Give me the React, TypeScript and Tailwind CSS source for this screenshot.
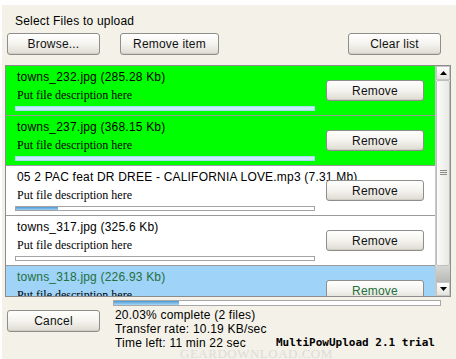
const files = [
  { name: "towns_232.jpg (285.28 Kb)", bg: "bg-[#00ff00]", text: "text-black", done: true, pct: 100 },
  { name: "towns_237.jpg (368.15 Kb)", bg: "bg-[#00ff00]", text: "text-black", done: true, pct: 100 },
  { name: "05 2 PAC feat DR DREE - CALIFORNIA LOVE.mp3 (7.31 Mb)", bg: "bg-white", text: "text-black", done: false, pct: 14 },
  { name: "towns_317.jpg (325.6 Kb)", bg: "bg-white", text: "text-black", done: false, pct: 0 },
  { name: "towns_318.jpg (226.93 Kb)", bg: "bg-[#9fd3f7]", text: "text-[#23703c]", done: false, pct: 0 },
];

const XpButton = ({ label, className, textClass }: { label: string; className?: string; textClass?: string }) => (
  <button
    className={`flex items-center justify-center rounded-[3px] border border-[#8e8e8a] bg-gradient-to-b from-white via-[#f4f3ee] to-[#dddbd2] text-[12px] tracking-[0.2px] shadow-[inset_0_-1px_0_#cfcdc4] ${textClass ?? "text-[#111]"} ${className ?? ""}`}
  >
    {label}
  </button>
);

const FileRow = ({ f }: { f: (typeof files)[number] }) => (
  <div className={`flex h-[50px] shrink-0 items-center justify-between border-b border-[#9a9a9a] pl-[9px] pr-[11px] ${f.bg}`}>
    <div className="flex w-[300px] flex-col self-start pt-[4px]">
      <p className={`ml-[2px] whitespace-nowrap text-[12px] leading-[15px] tracking-[0.2px] ${f.text}`}>{f.name}</p>
      <p className="ml-[2px] mt-[3px] whitespace-nowrap font-['Liberation_Serif',serif] text-[12px] leading-[15px] text-black">
        Put file description here
      </p>
      {f.done ? (
        <div className="mt-[3px] h-[5px] w-[300px] border border-[#a9d9ef] bg-[#c6ebfa]" />
      ) : (
        <div className="mt-[3px] h-[5px] w-[300px] border border-[#a4a4a4] bg-white">
          <div className="h-full bg-gradient-to-b from-[#4a9ad6] to-[#9ccdf0]" style={{ width: `${f.pct}%` }} />
        </div>
      )}
    </div>
    <XpButton label="Remove" className="h-[21px] w-[98px]" textClass={f.text === "text-black" ? "text-[#111]" : f.text} />
  </div>
);

const App = () => {
  return (
    <div className="relative h-[359px] w-[456px] overflow-hidden bg-white pl-[2px] pt-[5px] font-['Liberation_Sans',Arial,sans-serif]">
      <div className="flex h-full flex-col bg-[#f4f2e8] pl-[3px] pr-[4px]">
        <p className="ml-[10px] mt-[9px] text-[12px] leading-[15px] tracking-[0.2px] text-black">Select Files to upload</p>

        <div className="mt-[4px] flex items-center pl-[2px]">
          <XpButton label="Browse..." className="h-[22px] w-[93px]" />
          <XpButton label="Remove item" className="ml-[20px] h-[22px] w-[99px]" />
          <XpButton label="Clear list" className="ml-auto mr-[11px] h-[22px] w-[93px]" />
        </div>

        {/* file list */}
        <div className="mt-[10px] flex h-[232px] w-[446px] border border-[#8c8c8c] bg-white">
          <div className="flex flex-1 flex-col overflow-hidden">
            {files.map((f) => (
              <FileRow key={f.name} f={f} />
            ))}
          </div>
          <div className="flex w-[15px] flex-col border-l border-[#c8c8c8] bg-[#f3f3ef]">
            <div className="flex h-[14px] items-center justify-center border border-[#c4c4c4] bg-gradient-to-b from-white to-[#e4e4de]">
              <svg width="7" height="4" viewBox="0 0 7 4">
                <path d="M0 4 L3.5 0 L7 4 Z" fill="#000" />
              </svg>
            </div>
            <div className="flex h-[186px] items-center justify-center rounded-[2px] border border-[#bdbdbd] bg-gradient-to-r from-[#fbfbfb] to-[#e8e8e4]">
              <svg width="7" height="6" viewBox="0 0 7 6">
                <path d="M0 0.5 H7 M0 2.5 H7 M0 4.5 H7" stroke="#8a8a8a" strokeWidth="1" />
              </svg>
            </div>
            <div className="flex-1 bg-gradient-to-b from-[#d6d6d2] to-[#b8b8b4]" />
            <div className="flex h-[14px] items-center justify-center border border-[#c4c4c4] bg-gradient-to-b from-white to-[#e4e4de]">
              <svg width="7" height="4" viewBox="0 0 7 4">
                <path d="M0 0 L3.5 4 L7 0 Z" fill="#000" />
              </svg>
            </div>
          </div>
        </div>

        {/* footer */}
        <div className="flex">
          <XpButton label="Cancel" className="ml-[2px] mt-[13px] h-[22px] w-[93px]" />
          <div className="ml-[13px] flex flex-col">
            <div className="mt-[3px] h-[6px] w-[328px] border border-[#a8a8a8] bg-white">
              <div className="h-full w-[20%] bg-gradient-to-b from-[#4a9ad6] to-[#a9d6f3]" />
            </div>
            <div className="mt-[2px] pl-[2px] text-[12px] leading-[14px] tracking-[0.2px] text-black">
              <p>20.03% complete (2 files)</p>
              <p>Transfer rate: 10.19 KB/sec</p>
              <div className="flex">
                <span className="w-[161px]">Time left: 11 min 22 sec</span>
                <span className="font-['DejaVu_Sans_Mono',monospace] text-[11px] font-bold tracking-normal">MultiPowUpload 2.1 trial</span>
              </div>
            </div>
          </div>
        </div>
      </div>
      <p className="pointer-events-none absolute left-[180px] top-[347px] font-['Liberation_Serif',serif] text-[13px] leading-[13px] tracking-[0.5px] text-[#dcdcd8]">
        GEARDOWNLOAD.COM
      </p>
    </div>
  );
};

export default App;
